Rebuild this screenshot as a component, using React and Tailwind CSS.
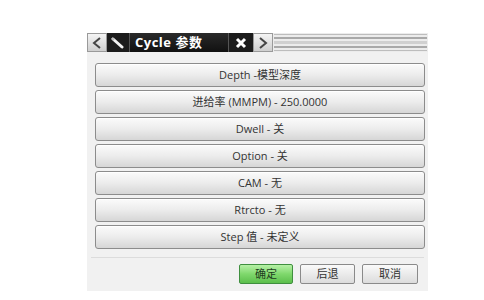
import React from "react";

const rows = [
  "Depth -模型深度",
  "进给率 (MMPM) - 250.0000",
  "Dwell - 关",
  "Option - 关",
  "CAM - 无",
  "Rtrcto - 无",
  "Step 值 - 未定义",
];

const font = { fontFamily: '"Open Sans", "Noto Sans CJK SC", sans-serif' };

function Arrow({ dir }) {
  return (
    <div className="w-[20px] h-full flex items-center justify-center bg-gradient-to-b from-[#f4f4f4] to-[#cfcfcf] border border-[#9a9a9a]">
      <svg width="10" height="12" viewBox="0 0 10 12">
        {dir === "left" ? (
          <path d="M8 1 L2 6 L8 11" fill="none" stroke="#444" strokeWidth="2" />
        ) : (
          <path d="M2 1 L8 6 L2 11" fill="none" stroke="#444" strokeWidth="2" />
        )}
      </svg>
    </div>
  );
}

export default function App() {
  return (
    <div className="w-[484px] h-[300px] bg-white overflow-hidden" style={font}>
      <div className="ml-[87px] mt-[33px] w-[341px] h-[258px] bg-[#f1f1f1] flex flex-col">
        {/* tab bar */}
        <div className="h-[19px] flex bg-[#e6e6e6]">
          <Arrow dir="left" />
          <div className="flex h-full bg-[#1c1c1c]">
            <div className="w-[23px] flex items-center justify-center border-r border-[#555]">
              <svg width="14" height="12" viewBox="0 0 14 12">
                <path d="M2 2 L11 10" stroke="#f2f2f2" strokeWidth="3" strokeLinecap="round" />
                <path d="M1 1 L3 3" stroke="#bbb" strokeWidth="2" />
              </svg>
            </div>
            <div className="w-[99px] flex items-center pl-[5px] text-white text-[13px] font-bold tracking-[0.5px] border-r border-[#555] bg-gradient-to-b from-[#2a2a2a] to-[#111]">
              Cycle 参数
            </div>
            <div className="w-[24px] flex items-center justify-center">
              <svg width="12" height="12" viewBox="0 0 12 12">
                <path d="M2 2 L10 10 M10 2 L2 10" stroke="#fff" strokeWidth="3" />
              </svg>
            </div>
          </div>
          <Arrow dir="right" />
          <div className="flex-1 flex flex-col justify-center gap-[2px] px-[1px] bg-[#ececec]">
            <div className="h-[1px] bg-[#bdbdbd]" />
            <div className="h-[2px] bg-[#a9a9a9]" />
            <div className="h-[3px] bg-[#d0d0d0]" />
            <div className="h-[2px] bg-[#a9a9a9]" />
            <div className="h-[1px] bg-[#bdbdbd]" />
          </div>
        </div>

        {/* rows */}
        <div className="flex flex-col gap-[3px] pl-[8px] pr-[3px] pt-[11px]">
          {rows.map((r, i) => (
            <div
              key={i}
              className="h-[24px] flex items-center justify-center rounded-[3px] border border-[#8c8c8c] bg-gradient-to-b from-[#fbfbfb] via-[#ececec] to-[#d6d6d6] text-[11px] text-[#333] shadow-[inset_0_1px_0_#fff]"
            >
              {r}
            </div>
          ))}
        </div>

        <div className="mt-[8px] mx-[4px] h-[1px] bg-[#dcdcdc]" />

        {/* bottom buttons */}
        <div className="flex justify-end gap-[7px] pr-[10px] pt-[6px]">
          <div className="w-[54px] h-[20px] flex items-center justify-center rounded-[2px] border border-[#3f8f3f] bg-gradient-to-b from-[#b6f0a6] via-[#7fd86c] to-[#5cbf4c] text-[11px] text-[#1e3d1e]">
            确定
          </div>
          <div className="w-[55px] h-[20px] flex items-center justify-center rounded-[2px] border border-[#8a8a8a] bg-gradient-to-b from-[#fafafa] to-[#dcdcdc] text-[11px] text-[#333]">
            后退
          </div>
          <div className="w-[56px] h-[20px] flex items-center justify-center rounded-[2px] border border-[#8a8a8a] bg-gradient-to-b from-[#fafafa] to-[#dcdcdc] text-[11px] text-[#333]">
            取消
          </div>
        </div>
      </div>
    </div>
  );
}
